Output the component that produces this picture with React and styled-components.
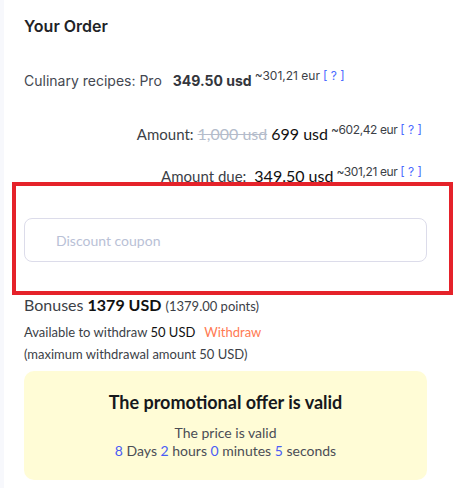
import React from "react";
import styled, { createGlobalStyle } from "styled-components";

const GlobalStyle = createGlobalStyle`
  html, body {
    margin: 0;
    padding: 0;
    background: #f7f8fc;
  }
  * {
    box-sizing: border-box;
  }
`;

function Help() {
  return <HelpLink>[ ? ]</HelpLink>;
}

function App() {
  return (
    <>
      <GlobalStyle />
      <Page>
        <Panel>
          <Title>Your Order</Title>

          <ProductRow>
            <ProductName>Culinary recipes: Pro</ProductName>
            <ProductPrice>349.50 usd</ProductPrice>
            <Eur>~301,21 eur</Eur>
            <Help />
          </ProductRow>

          <AmountRow>
            <AmountLabel>Amount:</AmountLabel>
            <OldPrice>1,000 usd</OldPrice>
            <Price>699 usd</Price>
            <Eur $tight>~602,42 eur</Eur>
            <Help />
          </AmountRow>

          <AmountRow $gap>
            <AmountLabel>Amount due:</AmountLabel>
            <Price $wide>349.50 usd</Price>
            <Eur $tight>~301,21 eur</Eur>
            <Help />
          </AmountRow>

          <CouponArea>
            <CouponInput placeholder="Discount coupon" />
          </CouponArea>

          <Bonuses>
            Bonuses <strong>1379 USD</strong> <Points>(1379.00 points)</Points>
          </Bonuses>
          <SmallLine>
            Available to withdraw <Dark>50 USD</Dark>
            <WithdrawLink>Withdraw</WithdrawLink>
          </SmallLine>
          <SmallLine $muted>(maximum withdrawal amount 50 USD)</SmallLine>

          <Promo>
            <PromoTitle>The promotional offer is valid</PromoTitle>
            <PromoText>The price is valid</PromoText>
            <PromoText>
              <Num>8</Num> Days <Num>2</Num> hours <Num>0</Num> minutes{" "}
              <Num>5</Num> seconds
            </PromoText>
          </Promo>

          <Highlight />
        </Panel>
      </Page>
    </>
  );
}

export default App;

const Page = styled.div`
  padding-left: 4px;
  min-height: 488px;
`;

const Panel = styled.div`
  position: relative;
  background: #ffffff;
  min-height: 488px;
  padding: 16px 26px 0 20px;
`;

const Title = styled.div`
  font-family: Inter, "Liberation Sans", sans-serif;
  font-size: 16px;
  font-weight: 600;
  color: #222327;
  line-height: 20px;
`;

const ProductRow = styled.div`
  display: flex;
  align-items: baseline;
  margin-top: 35px;
  font-family: Inter, "Liberation Sans", sans-serif;
  color: #444851;
  line-height: 20px;
`;

const ProductName = styled.span`
  font-size: 14px;
  margin-right: 11px;
`;

const ProductPrice = styled.span`
  font-size: 14px;
  font-weight: 700;
  color: #34363c;
  margin-right: 3px;
`;

const Eur = styled.span`
  font-family: Inter, "Liberation Sans", sans-serif;
  font-size: 12px;
  letter-spacing: ${(p) => (p.$tight ? "-0.4px" : "0")};
  color: #3c3f47;
  position: relative;
  top: -6px;
`;

const HelpLink = styled.span`
  font-family: Inter, "Liberation Sans", sans-serif;
  font-size: 12px;
  color: #4b6bff;
  margin-left: 3px;
  position: relative;
  top: -6px;
`;

const AmountRow = styled.div`
  display: flex;
  justify-content: flex-end;
  align-items: baseline;
  padding-right: 5px;
  margin-top: ${(p) => (p.$gap ? "16px" : "30px")};
  font-family: Lato, "Liberation Sans", sans-serif;
  line-height: 24px;
`;

const AmountLabel = styled.span`
  font-size: 15px;
  color: #3c3f47;
  margin-right: 4px;
`;

const OldPrice = styled.span`
  font-size: 16px;
  color: #b4bccb;
  text-decoration: line-through;
  margin-right: 4px;
`;

const Price = styled.span`
  font-size: 16px;
  color: #111;
  margin-left: ${(p) => (p.$wide ? "4px" : "0")};
  margin-right: 3px;
`;

const CouponArea = styled.div`
  padding: 28px 0 0;
  margin-bottom: 32px;
`;

const CouponInput = styled.input`
  display: block;
  width: 100%;
  height: 44px;
  border: 1px solid #dcdcea;
  border-radius: 8px;
  padding: 0 0 0 31px;
  font-family: Lato, "Liberation Sans", sans-serif;
  font-size: 14px;
  outline: none;
  &::placeholder {
    color: #b9c1d6;
  }
`;

const Bonuses = styled.div`
  font-family: Lato, "Liberation Sans", sans-serif;
  font-size: 16px;
  color: #3c3f47;
  line-height: 22px;
  strong {
    font-weight: 700;
    color: #111;
  }
`;

const Points = styled.span`
  font-size: 13px;
`;

const SmallLine = styled.div`
  font-family: Lato, "Liberation Sans", sans-serif;
  font-size: 13px;
  color: #3c3f47;
  line-height: 22px;
  margin-top: ${(p) => (p.$muted ? "0" : "4px")};
`;

const Dark = styled.span`
  color: #111;
`;

const WithdrawLink = styled.span`
  color: #ff7a52;
  margin-left: 9px;
`;

const Promo = styled.div`
  margin-top: 6px;
  background: #fffcd6;
  border-radius: 10px;
  height: 109px;
  padding-top: 19px;
  text-align: center;
  font-family: Lato, "Liberation Sans", sans-serif;
`;

const PromoTitle = styled.div`
  font-size: 18px;
  font-weight: 700;
  color: #16181c;
  line-height: 24px;
  margin-bottom: 10px;
`;

const PromoText = styled.div`
  font-size: 14px;
  color: #4b4d55;
  line-height: 18px;
`;

const Num = styled.span`
  color: #4b5cf5;
`;

const Highlight = styled.div`
  position: absolute;
  left: 8px;
  top: 182px;
  width: 441px;
  height: 113px;
  border: 4px solid #e5222a;
  pointer-events: none;
`;
